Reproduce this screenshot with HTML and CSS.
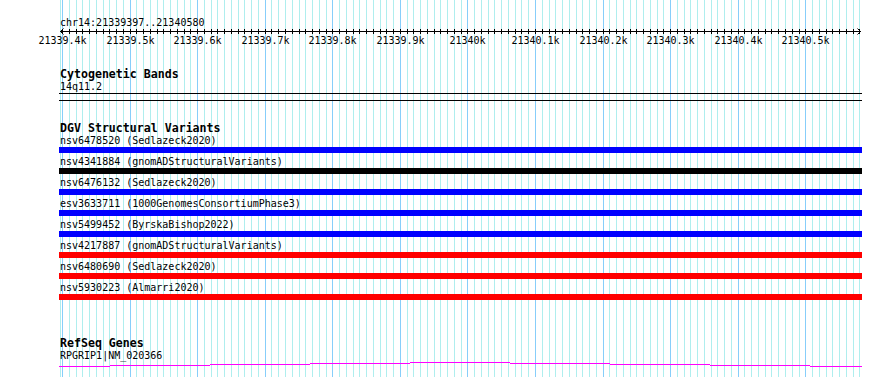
FILE: index.html
```html
<!DOCTYPE html>
<html lang="en">
<head>
  <meta charset="UTF-8">
  <meta name="viewport" content="width=device-width, initial-scale=1.0">
  <title>chr14:21339397..21340580</title>
  <link rel="stylesheet" href="styles.css">
</head>
<body>
  <div class="panel">
    <svg class="grid" id="grid" width="890" height="377" shape-rendering="crispEdges"></svg>

    <div class="ruler">
      <div class="ruler-title">chr14:21339397..21340580</div>
      <svg class="ruler-axis" id="ruler" width="890" height="20"></svg>
    </div>

    <div class="track track-bands">
      <div class="track-title">Cytogenetic Bands</div>
      <div class="feature-label">14q11.2</div>
      <div class="band"></div>
    </div>

    <div class="track track-dgv">
      <div class="track-title">DGV Structural Variants</div>
      <div class="feature">
        <div class="feature-label">nsv6478520 (Sedlazeck2020)</div>
        <div class="bar bar-gain"></div>
      </div>
      <div class="feature">
        <div class="feature-label">nsv4341884 (gnomADStructuralVariants)</div>
        <div class="bar bar-complex"></div>
      </div>
      <div class="feature">
        <div class="feature-label">nsv6476132 (Sedlazeck2020)</div>
        <div class="bar bar-gain"></div>
      </div>
      <div class="feature">
        <div class="feature-label">esv3633711 (1000GenomesConsortiumPhase3)</div>
        <div class="bar bar-gain"></div>
      </div>
      <div class="feature">
        <div class="feature-label">nsv5499452 (ByrskaBishop2022)</div>
        <div class="bar bar-gain"></div>
      </div>
      <div class="feature">
        <div class="feature-label">nsv4217887 (gnomADStructuralVariants)</div>
        <div class="bar bar-loss"></div>
      </div>
      <div class="feature">
        <div class="feature-label">nsv6480690 (Sedlazeck2020)</div>
        <div class="bar bar-loss"></div>
      </div>
      <div class="feature">
        <div class="feature-label">nsv5930223 (Almarri2020)</div>
        <div class="bar bar-loss"></div>
      </div>
    </div>

    <div class="track track-genes">
      <div class="track-title">RefSeq Genes</div>
      <div class="feature-label">RPGRIP1|NM_020366</div>
      <svg class="gene" width="803" height="6" viewBox="0 0 803 6" shape-rendering="crispEdges">
        <path d="M0 4.5H51M51 3.5H151M151 2.5H251M251 1.5H351M351 0.5H451M451 1.5H551M551 2.5H651M651 3.5H751M751 4.5H803"></path>
      </svg>
    </div>
  </div>

  <script>
    const start = 21339397;
    const end = 21340580;
    const ns = 'http://www.w3.org/2000/svg';

    function xOf(pos) {
      return Math.round(60 + (pos - start) * 800 / (end - start + 1));
    }

    function line(svg, x1, y1, x2, y2, cls) {
      const el = document.createElementNS(ns, 'line');
      el.setAttribute('x1', x1);
      el.setAttribute('y1', y1);
      el.setAttribute('x2', x2);
      el.setAttribute('y2', y2);
      el.setAttribute('class', cls);
      svg.appendChild(el);
    }

    const grid = document.getElementById('grid');
    const ruler = document.getElementById('ruler');

    line(grid, 60.5, 0, 60.5, 377, 'minor');
    for (let pos = 21339400; pos <= end; pos += 10) {
      const x = xOf(pos) + 0.5;
      const major = pos % 100 === 0;
      line(grid, x, 0, x, 377, major ? 'major' : 'minor');
      line(ruler, x, 0, x, 5, 'tick');
      if (major) {
        const label = document.createElementNS(ns, 'text');
        label.setAttribute('x', x);
        label.setAttribute('y', 15);
        const k = pos / 1000;
        label.textContent = (Number.isInteger(k) ? k : k.toFixed(1)) + 'k';
        ruler.appendChild(label);
      }
    }

    // axis with arrow heads at both ends
    line(ruler, 60, 2.5, 861, 2.5, 'axis');
    line(ruler, 60.5, 2.5, 63.5, -0.5, 'axis');
    line(ruler, 60.5, 2.5, 63.5, 5.5, 'axis');
    line(ruler, 860.5, 2.5, 857.5, -0.5, 'axis');
    line(ruler, 860.5, 2.5, 857.5, 5.5, 'axis');
  </script>
</body>
</html>
```

FILE: styles.css
```css
body {
  margin: 0;
  background: #ffffff;
  color: #000000;
  font-family: "DejaVu Sans Mono", "Liberation Mono", monospace;
}
.panel {
  position: relative;
  width: 890px;
  height: 377px;
  overflow: hidden;
}
.grid {
  position: absolute;
  top: 0;
  left: 0;
}
.grid .minor {
  stroke: #afeeee;
  stroke-width: 1;
}
.grid .major {
  stroke: #87cefa;
  stroke-width: 1;
}
.ruler {
  position: relative;
  padding-top: 17px;
}
.ruler-title {
  margin-left: 60px;
  font-size: 10px;
  line-height: 12px;
}
.ruler-axis {
  display: block;
  overflow: visible;
}
.ruler-axis .tick,
.ruler-axis .axis {
  stroke: #000000;
  stroke-width: 1;
}
.ruler-axis text {
  font-family: "DejaVu Sans Mono", "Liberation Mono", monospace;
  font-size: 10px;
  text-anchor: middle;
  fill: #000000;
}
.track {
  position: relative;
  margin-left: 59px;
  width: 803px;
}
.track-bands {
  margin-top: 19px;
}
.track-dgv {
  margin-top: 21px;
}
.track-genes {
  margin-top: 37px;
}
.track-title {
  font-size: 11.6px;
  font-weight: bold;
  line-height: 13px;
  padding-left: 1px;
}
.feature-label {
  font-size: 10px;
  line-height: 12px;
  padding-left: 1px;
  white-space: nowrap;
}
.band {
  height: 6px;
  border-top: 1px solid #000000;
  border-bottom: 1px solid #000000;
}
.feature {
  margin-bottom: 3px;
}
.bar {
  height: 6px;
}
.bar-gain {
  background: #0000ff;
}
.bar-loss {
  background: #ff0000;
}
.bar-complex {
  background: #000000;
}
.gene {
  display: block;
}
.gene path {
  fill: none;
  stroke: #ff00ff;
  stroke-width: 1;
}
```
